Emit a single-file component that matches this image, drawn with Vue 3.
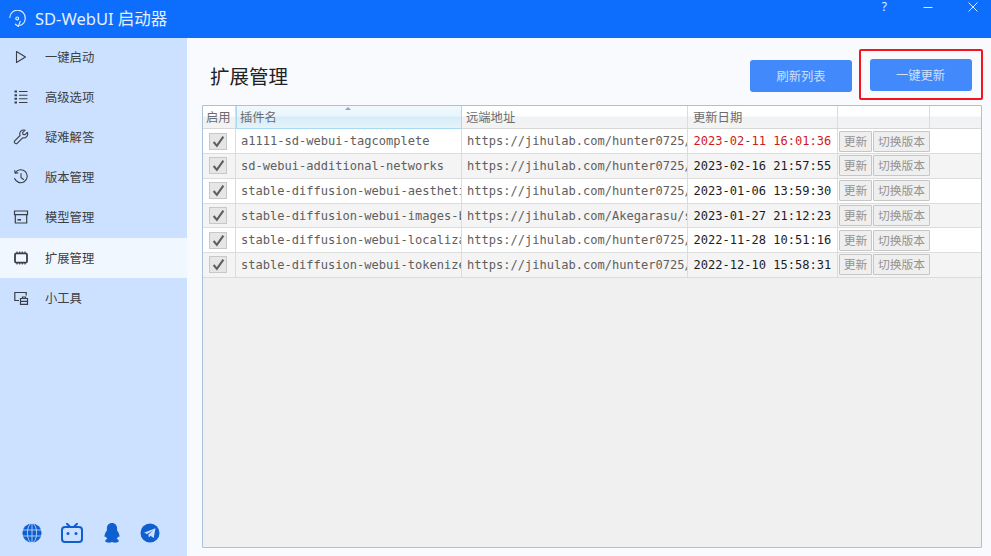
<script setup>
const nav = [
  { label: '一键启动', icon: 'play' },
  { label: '高级选项', icon: 'list' },
  { label: '疑难解答', icon: 'wrench' },
  { label: '版本管理', icon: 'history' },
  { label: '模型管理', icon: 'archive' },
  { label: '扩展管理', icon: 'chip', active: true },
  { label: '小工具', icon: 'tool' },
]
const rows = [
  { name: 'a1111-sd-webui-tagcomplete', url: 'https://jihulab.com/hunter0725/a1111-sd-webui-tagcomplete', date: '2023-02-11 16:01:36', fresh: true },
  { name: 'sd-webui-additional-networks', url: 'https://jihulab.com/hunter0725/sd-webui-additional-networks', date: '2023-02-16 21:57:55' },
  { name: 'stable-diffusion-webui-aesthetic-gradients', url: 'https://jihulab.com/hunter0725/stable-diffusion', date: '2023-01-06 13:59:30' },
  { name: 'stable-diffusion-webui-images-browser', url: 'https://jihulab.com/Akegarasu/sd-webui-images', date: '2023-01-27 21:12:23' },
  { name: 'stable-diffusion-webui-localization-zh_CN', url: 'https://jihulab.com/hunter0725/stable-diffusion', date: '2022-11-28 10:51:16' },
  { name: 'stable-diffusion-webui-tokenizer', url: 'https://jihulab.com/hunter0725/stable-diffusion', date: '2022-12-10 15:58:31' },
]
</script>

<template>
  <div class="app">
    <header class="titlebar">
      <svg class="logo" viewBox="0 0 17 17" width="17" height="17" fill="none" stroke="#dbe9ff" stroke-width="1.200">
        <path d="M.8 7.500A7.700 7.700 0 0 1 16.200 8.200c0 3.400-2.300 6.300-5.400 7.300" stroke-linecap="round" />
        <path d="M11.200 11.400l-1.800 5-3-2.200" stroke-linecap="round" stroke-linejoin="round" />
        <circle cx="8.200" cy="8.400" r="1.400" />
      </svg>
      <span class="apptitle">SD-WebUI 启动器</span>
      <div class="winbtns">
        <span class="help">?</span>
        <svg width="10" height="10" viewBox="0 0 10 10" stroke="#dbe9ff" stroke-width="1"><path d="M0.500 5.500h9" /></svg>
        <svg width="10" height="10" viewBox="0 0 10 10" stroke="#dbe9ff" stroke-width="1"><path d="M.5 .5l9 9M9.500 .5l-9 9" /></svg>
      </div>
    </header>
    <div class="body">
      <aside class="sidebar">
        <nav class="nav">
          <div v-for="n in nav" :key="n.label" class="navitem" :class="{ active: n.active }">
            <svg class="navicon" viewBox="0 0 16 16" width="16" height="16" fill="none" stroke="#3a3f47" stroke-width="1.100">
              <path v-if="n.icon === 'play'" d="M3.500 2.500v11l9-5.500z" stroke-linejoin="round" />
              <g v-else-if="n.icon === 'list'">
                <path d="M6 2.500h8.500M6 6.300h8.500M6 9.700h8.500M6 13.500h8.500" />
                <path d="M1.500 1.500h2.500v2h-2.500zM1.500 5.300h2.500v2h-2.500zM1.500 8.700h2.500v2h-2.500zM1.500 12.500h2.500v2h-2.500z" fill="#3a3f47" stroke="none" />
              </g>
              <path v-else-if="n.icon === 'wrench'" d="M14.300 3.300l-2.600 2.500-1.700-.4-.4-1.700 2.500-2.500a4 4 0 0 0-5 5.300L1.900 11.700a1.700 1.700 0 0 0 2.500 2.400l5.200-5.300a4 4 0 0 0 4.700-5.500z" stroke-linejoin="round" />
              <g v-else-if="n.icon === 'history'">
                <path d="M2.300 3.600A6.500 6.500 0 1 1 1.600 9.500" stroke-linecap="round" />
                <path d="M1.800 1.500l.4 2.600 2.600-.2" stroke-linecap="round" />
                <path d="M8 4.500v4l2.500 2" stroke-linecap="round" />
              </g>
              <g v-else-if="n.icon === 'archive'">
                <path d="M1.500 2h13v3.600h-13zM2.300 5.600v8.400h11.400v-8.400" stroke-width="1.200" />
                <path d="M4.500 10.800h3.500" stroke-width="1.600" />
              </g>
              <g v-else-if="n.icon === 'chip'">
                <rect x="2" y="3.300" width="12" height="9.400" rx="1.500" stroke-width="1.800" />
                <path d="M4 1.500v1.800M6.700 1.500v1.800M9.300 1.500v1.800M12 1.500v1.800M4 12.700v1.800M6.700 12.700v1.800M9.300 12.700v1.800M12 12.700v1.800" />
              </g>
              <g v-else>
                <path d="M6 10.500h-4.200v-8h11.400v3" stroke-width="1.200" />
                <path d="M7.500 8.500h7v5.800h-7zM7.500 11.300h7M9.500 8.500v-1.500h3v1.500" stroke-width="1.200" />
              </g>
            </svg>
            <span class="navlabel">{{ n.label }}</span>
          </div>
        </nav>
        <div class="social">
          <svg viewBox="0 0 20 20" width="20" height="20" fill="none">
            <circle cx="10" cy="10" r="9.600" fill="#0f5fd0" />
            <path d="M0 7h20M0 13h20M10 0v20" stroke="#cce0ff" stroke-width=".8" />
            <ellipse cx="10" cy="10" rx="4.600" ry="9.800" stroke="#cce0ff" stroke-width=".8" />
          </svg>
          <svg viewBox="0 0 22 20" width="22" height="20" fill="none" stroke="#0f5fd0" stroke-width="2">
            <rect x="1" y="4" width="20" height="15" rx="3" />
            <path d="M6 .8l3 3M16 .8l-3 3" stroke-linecap="round" />
            <circle cx="7" cy="10.500" r="1.500" fill="#0f5fd0" stroke="none" />
            <circle cx="15" cy="10.500" r="1.500" fill="#0f5fd0" stroke="none" />
          </svg>
          <svg viewBox="0 0 18 20" width="18" height="20">
            <path d="M9 0c3.300 0 5 2.500 5.100 5.300v2.100c1.300 1.800 2.400 3.700 2.400 5.500 0 1.200-.5 1.500-1.500 .6-.2 1-.7 1.900-1.400 2.600 1 .4 2.200 1 2.200 2 0 1.200-3 1.700-4.800 1.500-1-.1-1.500-.7-2-.7s-1 .6-2 .7c-1.800.2-4.800-.3-4.800-1.500 0-1 1.200-1.600 2.200-2-.7-.7-1.200-1.600-1.400-2.600-1 .9-1.500 .6-1.500-.6 0-1.800 1.100-3.700 2.400-5.500v-2.100C3.900 2.500 5.700 0 9 0z" fill="#0f5fd0" />
          </svg>
          <svg viewBox="0 0 20 20" width="20" height="20">
            <circle cx="10" cy="10" r="9.500" fill="#0f5fd0" />
            <path d="M4 9.800l11.500-4.600-1.800 9.900-3.200-2.400-1.700 1.800-.4-3 5-4.300-6.300 3.800z" fill="#cce0ff" />
          </svg>
        </div>
      </aside>
      <main class="main">
        <div class="headrow">
          <h1 class="title">扩展管理</h1>
          <div class="actions">
            <button class="btn">刷新列表</button>
            <div class="highlight"><button class="btn">一键更新</button></div>
          </div>
        </div>
        <div class="table">
          <div class="row head">
            <div class="cell c0 hc">启用</div>
            <div class="cell c1 hc sorted">插件名<i class="sort"></i></div>
            <div class="cell c2 hc">远端地址</div>
            <div class="cell c3 hc">更新日期</div>
            <div class="cell c4 hc"></div>
            <div class="cell c5 hc noline"></div>
          </div>
          <div v-for="r in rows" :key="r.name + r.date" class="row item">
            <div class="cell c0 center">
              <span class="check">
                <svg viewBox="0 0 12 12" width="13" height="13" fill="none" stroke="#606060" stroke-width="2"><path d="M1.500 6.500l3 3.500 6-8.500" /></svg>
              </span>
            </div>
            <div class="cell c1 mono">{{ r.name }}</div>
            <div class="cell c2 mono">{{ r.url }}</div>
            <div class="cell c3 mono date" :class="{ fresh: r.fresh }">{{ r.date }}</div>
            <div class="cell c4 btns">
              <span class="mini m1">更新</span>
              <span class="mini m2">切换版本</span>
            </div>
            <div class="cell c5 noline"></div>
          </div>
        </div>
      </main>
    </div>
  </div>
</template>

<style>
html, body { margin: 0; padding: 0; }
</style>

<style scoped>
.app {
  width: 991px;
  height: 556px;
  display: flex;
  flex-direction: column;
  overflow: hidden;
  font-family: "Noto Sans", "Noto Sans CJK SC", sans-serif;
  color: #333;
}
.titlebar {
  height: 37.500px;
  flex: none;
  background: #0d6efd;
  display: flex;
  align-items: center;
  padding-left: 9px;
  color: #e4eeff;
  padding-bottom: 1px;
  box-sizing: border-box;
}
.logo { margin-right: 9px; }
.apptitle { font-size: 16.500px; }
.winbtns {
  margin-left: auto;
  display: flex;
  align-items: center;
  gap: 35px;
  padding-right: 13px;
  margin-top: -22px;
}
.help { font-size: 12px; line-height: 14px; margin-right: 1px; }
.body { flex: 1; display: flex; min-height: 0; }
.sidebar {
  width: 187px;
  flex: none;
  background: #cce0ff;
  display: flex;
  flex-direction: column;
  justify-content: space-between;
}
.nav { display: flex; flex-direction: column; }
.navitem {
  height: 40.100px;
  display: flex;
  align-items: center;
  padding-left: 13px;
  box-sizing: border-box;
}
.navitem.active { background: #f0f7ff; }
.navicon { margin-right: 16px; flex: none; margin-top: -1px; }
.navlabel { font-size: 12.300px; color: #3c4043; margin-top: -1px; }
.social {
  display: flex;
  align-items: center;
  justify-content: space-between;
  padding: 0 27px 13px 22px;
}
.main {
  flex: 1;
  min-width: 0;
  background: #f8fafd;
  padding: 0 9px 8px 15px;
  display: flex;
  flex-direction: column;
}
.headrow {
  height: 67.500px;
  flex: none;
  display: flex;
  justify-content: space-between;
  align-items: flex-start;
}
.title {
  margin: 26px 0 0 8px;
  font-size: 19.500px;
  font-weight: 400;
  line-height: 26px;
  color: #202124;
}
.actions { display: flex; align-items: flex-start; margin-top: 11px; margin-right: -1px; }
.btn {
  width: 102px;
  height: 32px;
  margin-top: 11px;
  display: block;
  border: 0;
  border-radius: 3px;
  background: #4289fb;
  color: #cfe0fb;
  font-family: inherit;
  font-size: 12.300px;
  padding: 0;
}
.highlight {
  width: 124px;
  height: 51px;
  box-sizing: border-box;
  border: 2.500px solid #f5141c;
  border-radius: 2px;
  margin-left: 7px;
  padding-left: 8.500px;
}
.highlight .btn { margin-top: 8.500px; }
.table {
  flex: 1;
  min-height: 0;
  border: 1.500px solid #a9c2db;
  border-radius: 1px;
  background: #f0f0f0;
  overflow: hidden;
}
.row { display: flex; }
.head { height: 23.300px; }
.item { height: 24.750px; background: #fff; box-sizing: border-box; border-bottom: 1px solid #dcdcdc; }
.item:nth-child(odd) { background: #f4f4f4; }
.cell {
  box-sizing: border-box;
  height: 100%;
  border-right: 1px solid #dcdcdc;
  overflow: hidden;
  white-space: nowrap;
  flex: none;
  position: relative;
}
.hc {
  background: linear-gradient(#fff 0, #fff 45%, #f0f2f3 50%, #f3f3f3 100%);
  border-bottom: 1px solid #d8d8d8;
  font-size: 12.300px;
  line-height: 23.500px;
  color: #6c6c6c;
  padding-left: 3px;
}
.c2.hc { padding-left: 4px; }
.c3.hc { padding-left: 5px; }
.sorted {
  background: linear-gradient(#eff8fd 0, #e9f5fc 45%, #d6ecf8 50%, #e6f3fa 100%);
  border: 1px solid #a8daf5;
  border-top: 0;
  line-height: 23px;
  padding-left: 3px;
}
.sort {
  position: absolute;
  left: 108px;
  top: 1px;
  width: 0;
  height: 0;
  border-left: 3.500px solid transparent;
  border-right: 3.500px solid transparent;
  border-bottom: 3.500px solid #8aa6c0;
}
.c0 { width: 33px; }
.c1 { width: 226px; }
.c2 { width: 226px; }
.c3 { width: 150px; }
.c4 { width: 92px; border-right: 0; }
.head .c4 { border-right: 1px solid #dcdcdc; }
.c5 { flex: 1; border-right: 0; }
.noline { border-right: 0; }
.mono {
  font-family: "DejaVu Sans Mono", monospace;
  font-size: 12.050px;
  line-height: 25px;
  color: #5e5e5e;
  padding-left: 5px;
}
.date { color: #1c1c1c; padding-left: 5.500px; }
.fresh { color: #d01a1a; }
.center { display: flex; align-items: center; justify-content: center; padding-right: 2px; }
.check {
  width: 18px;
  height: 17px;
  box-sizing: border-box;
  border: 1px solid #c8c8c8;
  background: #e6e6e6;
  display: flex;
  align-items: center;
  justify-content: center;
}
.btns { display: flex; align-items: center; padding-left: 1px; }
.mini {
  height: 21px;
  box-sizing: border-box;
  border: 1px solid #c6c6c6;
  background: #efefef;
  color: #939393;
  font-size: 11.800px;
  line-height: 19px;
  text-align: center;
  border-radius: 1px;
}
.m1 { width: 33px; }
.m2 { width: 57px; margin-left: 1px; }
</style>
